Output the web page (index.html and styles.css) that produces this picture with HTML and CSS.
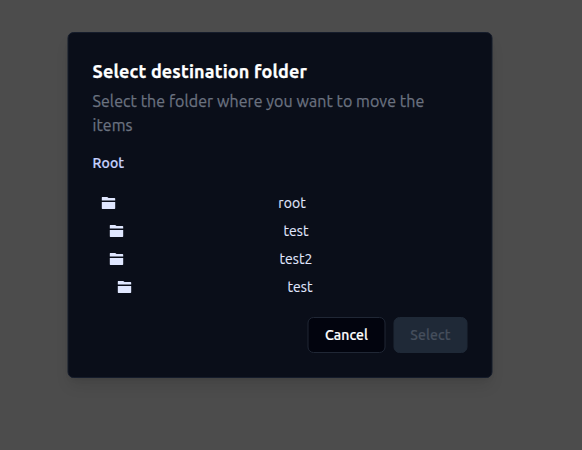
FILE: index.html
```
<!DOCTYPE html>
<html lang="en">
<head>
<meta charset="utf-8">
<title>Select destination folder</title>
<link rel="stylesheet" href="styles.css">
</head>
<body>
<svg class="sprite" aria-hidden="true"><symbol id="folder" viewBox="0 0 16 16"><path d="M1.3 5.5V2.5Q1.3 2 1.8 2H6.7L8.1 3.1H14Q14.7 3.1 14.7 3.8V5.5zM1.3 7H14.7V13.3Q14.7 14 14 14H1.9Q1.3 14 1.3 13.3z"/></symbol></svg>
<main class="dialog" role="dialog">
  <h1 class="title">Select destination folder</h1>
  <p class="description">Select the folder where you want to move the items</p>
  <div class="current">Root</div>
  <div class="tree">
    <div class="row"><svg class="icon"><use href="#folder"/></svg><span class="name">root</span></div>
    <div class="row level-1"><svg class="icon"><use href="#folder"/></svg><span class="name">test</span></div>
    <div class="row level-1"><svg class="icon"><use href="#folder"/></svg><span class="name">test2</span></div>
    <div class="row level-2"><svg class="icon"><use href="#folder"/></svg><span class="name">test</span></div>
  </div>
  <div class="actions">
    <button class="button cancel">Cancel</button>
    <button class="button select" disabled>Select</button>
  </div>
</main>
</body>
</html>
```
FILE: styles.css
```
* { box-sizing: border-box; }
body {
  margin: 0;
  height: 450px;
  padding: 32px 0 0 67px;
  overflow: hidden;
  background: #4c4c4c;
  font-family: Ubuntu, "Noto Sans", sans-serif;
}
.sprite { display: none; }
.dialog {
  width: 425px;
  height: 346px;
  padding: 24px;
  border: 1px solid #151c2b;
  border-radius: 6px;
  background: #0a0e19;
  box-shadow: 0 10px 15px -3px rgba(0, 0, 0, .1), 0 4px 6px -4px rgba(0, 0, 0, .1);
  transform: translateX(.5px);
}
.title {
  margin: 0 0 4px;
  color: #fff;
  font-size: 18px;
  line-height: 28px;
  font-weight: 700;
  letter-spacing: .16px;
  -webkit-text-stroke: .25px currentColor;
}
.description {
  margin: 0;
  padding-right: 16px;
  color: #6b7280;
  font-size: 16px;
  line-height: 24px;
  font-weight: 400;
  letter-spacing: .075px;
  -webkit-text-stroke: .25px currentColor;
}
.current {
  margin-top: 16px;
  color: #c7d2fe;
  font-size: 14px;
  line-height: 20px;
  font-weight: 500;
  letter-spacing: .15px;
  -webkit-text-stroke: .2px currentColor;
}
.tree { margin-top: 16px; }
.row {
  display: flex;
  align-items: center;
  height: 28px;
  padding-left: 8px;
}
.level-1 { padding-left: 16px; }
.level-2 { padding-left: 24px; }
.icon { width: 16px; height: 16px; fill: #e0e7ff; }
.name {
  flex: 1;
  text-align: center;
  color: #e0e7ff;
  font-size: 14px;
  line-height: 20px;
  letter-spacing: .05px;
  -webkit-text-stroke: .12px currentColor;
}
.actions {
  display: flex;
  justify-content: flex-end;
  gap: 8px;
  margin-top: 16px;
}
.button {
  height: 36px;
  padding: 0;
  border: 1px solid #202735;
  border-radius: 6px;
  font: 500 14px/20px Ubuntu, "Noto Sans", sans-serif;
  letter-spacing: .1px;
  -webkit-text-stroke: .2px currentColor;
}
.cancel { width: 78px; background: #02040e; color: #fff; }
.select { width: 74px; border-color: #1f2937; background: #1f2937; color: #454e5c; }
```
